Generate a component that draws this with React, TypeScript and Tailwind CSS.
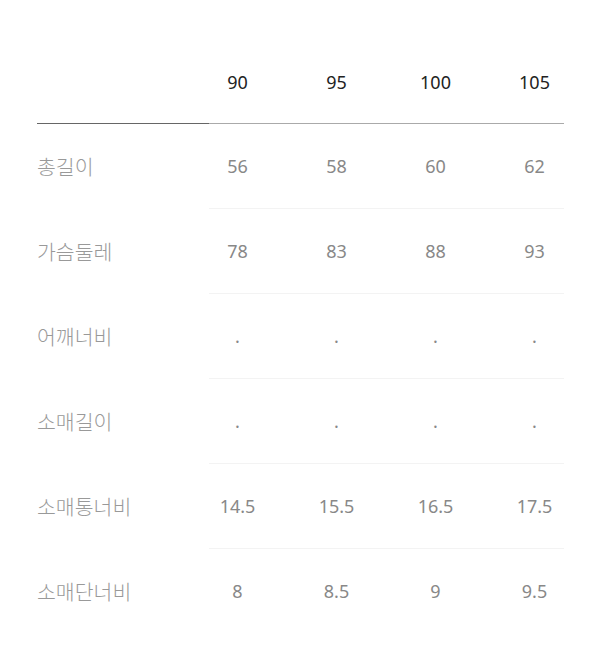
const sizes = ["90", "95", "100", "105"];

const rows: { label: string; values: string[] }[] = [
  { label: "총길이", values: ["56", "58", "60", "62"] },
  { label: "가슴둘레", values: ["78", "83", "88", "93"] },
  { label: "어깨너비", values: [".", ".", ".", "."] },
  { label: "소매길이", values: [".", ".", ".", "."] },
  { label: "소매통너비", values: ["14.5", "15.5", "16.5", "17.5"] },
  { label: "소매단너비", values: ["8", "8.5", "9", "9.5"] },
];

export default function App() {
  return (
    <div
      className="w-[600px] h-[669px] bg-white pt-[41px] pl-[37px]"
      style={{ fontFamily: '"Noto Sans", "Noto Sans CJK KR", sans-serif' }}
    >
      <div className="w-[527px]">
        {/* header */}
        <div className="flex h-[82px] items-end pb-[29px]">
          <div className="w-[151px] shrink-0" />
          {sizes.map((s) => (
            <div key={s} className="w-[99px] shrink-0 text-center text-[18px] leading-6 text-[#222]">
              {s}
            </div>
          ))}
        </div>
        <div className="flex h-px">
          <div className="w-[172px] bg-[#666]" />
          <div className="flex-1 bg-[#aaa]" />
        </div>

        {rows.map((row, i) => (
          <div key={row.label}>
            <div className="flex h-[84px] items-center">
              <div
                className="w-[151px] shrink-0 text-[20.5px] font-light leading-6 text-[#999]"
                style={{ fontFamily: '"Noto Sans CJK KR", sans-serif' }}
              >
                {row.label}
              </div>
              {row.values.map((v, j) => (
                <div key={j} className="w-[99px] shrink-0 text-center text-[18px] leading-6 text-[#888]">
                  {v}
                </div>
              ))}
            </div>
            {i < rows.length - 1 && <div className="ml-[172px] h-px bg-[#f3f3f3]" />}
          </div>
        ))}
      </div>
    </div>
  );
}
